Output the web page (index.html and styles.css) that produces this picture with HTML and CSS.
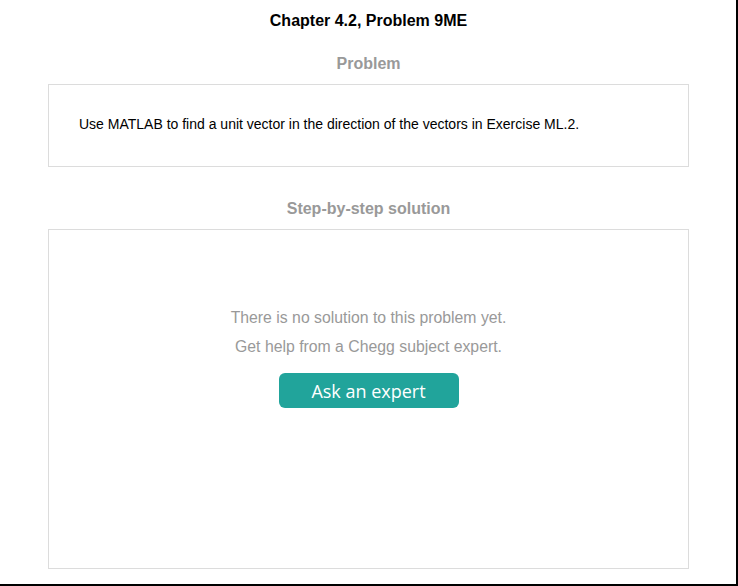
FILE: index.html
```html
<!DOCTYPE html>
<html lang="en">
<head>
<meta charset="utf-8">
<title>Chapter 4.2, Problem 9ME</title>
<link rel="stylesheet" href="styles.css">
</head>
<body>
<div class="page">
  <h1 class="title">Chapter 4.2, Problem 9ME</h1>
  <h2 class="section-heading">Problem</h2>
  <div class="problem-box">
    <p class="problem-text">Use MATLAB to find a unit vector in the direction of the vectors in Exercise ML.2.</p>
  </div>
  <h2 class="section-heading section-heading--solution">Step-by-step solution</h2>
  <div class="solution-box">
    <p class="solution-msg">There is no solution to this problem yet.</p>
    <p class="solution-msg">Get help from a Chegg subject expert.</p>
    <button class="ask-btn" type="button">Ask an expert</button>
  </div>
</div>
</body>
</html>
```
FILE: styles.css
```css
html, body {
  margin: 0;
  padding: 0;
  background: #fff;
}
body {
  font-family: "Liberation Sans", Arial, sans-serif;
}
.page {
  box-sizing: border-box;
  width: 738px;
  height: 586px;
  border-right: 2px solid #000;
  border-bottom: 2px solid #000;
  padding: 0 47px 0 48px;
  display: flex;
  flex-direction: column;
}
.title {
  margin: 11px 0 0;
  font-size: 16px;
  line-height: 20px;
  font-weight: bold;
  color: #000;
  text-align: center;
}
.section-heading {
  margin: 23px 0 10px;
  font-size: 16px;
  line-height: 20px;
  font-weight: bold;
  color: #999;
  text-align: center;
}
.section-heading--solution {
  margin-top: 32px;
}
.problem-box {
  border: 1px solid #dcdcdc;
  padding: 30px 30px 33px;
}
.problem-text {
  margin: 0;
  font-size: 14px;
  line-height: 18px;
  color: #000;
}
.solution-box {
  border: 1px solid #dcdcdc;
  height: 340px;
  box-sizing: border-box;
  padding-top: 73px;
  display: flex;
  flex-direction: column;
  align-items: center;
}
.solution-msg {
  margin: 0;
  font-size: 15.8px;
  line-height: 29px;
  color: #999;
}
.ask-btn {
  margin-top: 12px;
  width: 180px;
  height: 35px;
  border: none;
  border-radius: 6px;
  background: #21a49b;
  color: #fff;
  font-family: "Open Sans", "Noto Sans", sans-serif;
  font-size: 18px;
  padding: 0;
  cursor: pointer;
}
```
